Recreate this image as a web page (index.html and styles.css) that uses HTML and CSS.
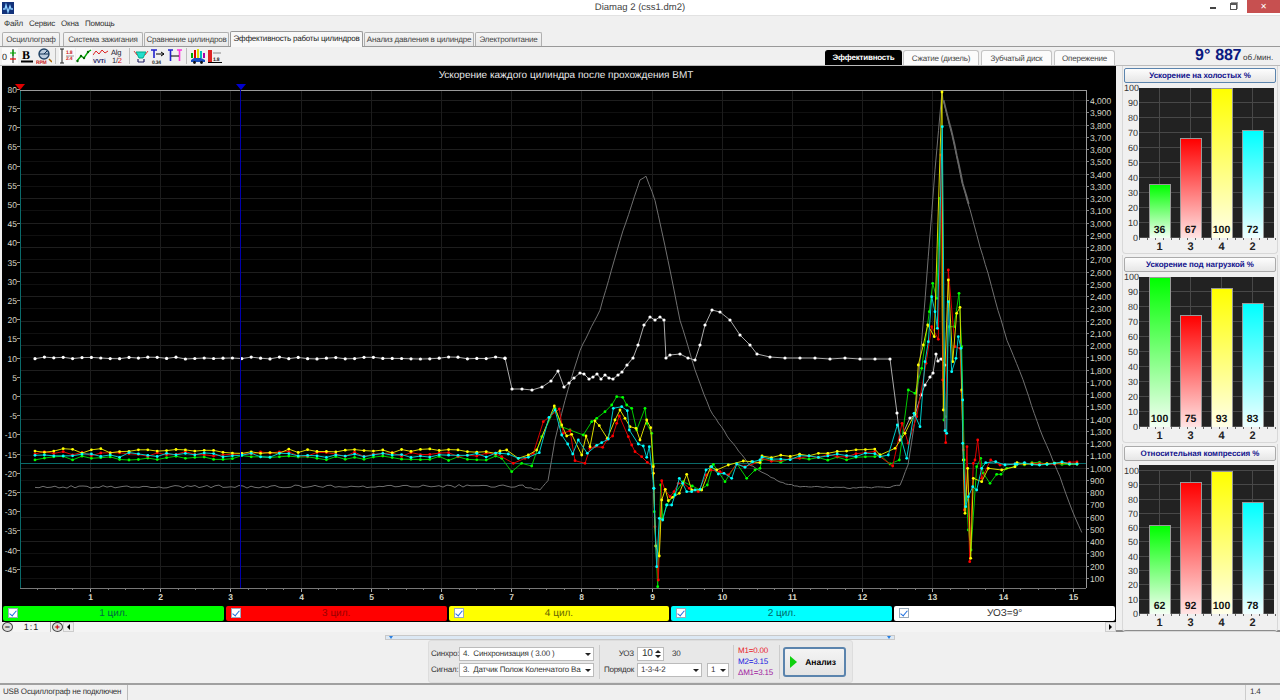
FILE: index.html
```html
<!DOCTYPE html>
<html lang="ru">
<head>
    <meta charset="UTF-8">
    <title>Diamag 2 (css1.dm2)</title>
    <link rel="stylesheet" href="styles.css">
</head>
<body>
<div class="app">
    <div class="titlebar">
        <svg class="app-icon" width="12" height="12" viewBox="0 0 12 12"><rect width="12" height="12" fill="#12327a"/><path d="M1 7h2l1-4 2 7 2-6 1 3h2" fill="none" stroke="#8fd0ff" stroke-width="1.3"/></svg>
        <div class="title-text">Diamag 2 (css1.dm2)</div>
        <div class="win-btns">
            <span class="win-min"></span>
            <span class="win-max"></span>
            <span class="win-close">✕</span>
        </div>
    </div>

    <div class="menubar">
        <span>Файл</span><span>Сервис</span><span>Окна</span><span>Помощь</span>
    </div>

    <div class="tabs">
        <div class="tab tab-a">Осциллограф</div>
        <div class="tab tab-b">Система зажигания</div>
        <div class="tab tab-c">Сравнение цилиндров</div>
        <div class="tab tab-d active">Эффективность работы цилиндров</div>
        <div class="tab tab-e">Анализ давления в цилиндре</div>
        <div class="tab tab-f">Электропитание</div>
    </div>

    <div class="toolbar">
        <div class="tools">
            <svg class="tool lit" viewBox="0 0 16 16"><text x="0" y="12" class="ic-t">0</text><path d="M11 1v14" stroke="#222"/><path d="M8 5h6M11 2v6" stroke="#0a0" stroke-width="1.2"/><path d="M8 11h6" stroke="#e00" stroke-width="1.2"/></svg>
            <svg class="tool" viewBox="0 0 16 16"><text x="3" y="11" class="ic-b">B</text><path d="M2 13.5h12" stroke="#000" stroke-width="2"/></svg>
            <svg class="tool" viewBox="0 0 16 16"><circle cx="8" cy="6" r="5" fill="#bcd" stroke="#246" stroke-width="1.4"/><path d="M8 6l3-3M3 6h10" stroke="#135"/><text x="0" y="15.5" class="ic-r">RPM</text><path d="M13 11l3 3" stroke="#a60" stroke-width="1.5"/></svg>
            <i class="tool-sep"></i>
            <svg class="tool lit" viewBox="0 0 16 16"><path d="M3 1v14M1 1h4M1 15h4" stroke="#222"/><text x="7" y="6" class="ic-r">1.8</text><text x="7" y="12" class="ic-r">2.4</text><path d="M7 8h8" stroke="#999"/></svg>
            <svg class="tool lit" viewBox="0 0 16 16"><path d="M1 13l4-5 3 2 4-6 3-2" fill="none" stroke="#0a0" stroke-width="1.4"/><circle cx="1.5" cy="13" r="1.2" fill="#060"/><circle cx="5" cy="8" r="1.2" fill="#060"/><circle cx="8" cy="10" r="1.2" fill="#060"/><circle cx="12" cy="4" r="1.2" fill="#060"/></svg>
            <svg class="tool" viewBox="0 0 16 16"><path d="M0 7l3-4 3 3 3-4 3 3 3-2" fill="none" stroke="#d22" stroke-width="1"/><text x="0" y="14.5" class="ic-v">VVTi</text></svg>
            <svg class="tool" viewBox="0 0 16 16"><text x="1" y="7" class="ic-a">Alg</text><text x="2" y="15" class="ic-a">1/<tspan fill="#d00">2</tspan></text></svg>
            <i class="tool-sep"></i>
            <svg class="tool" viewBox="0 0 16 16"><path d="M3 4h10l-3 6H6z" fill="#2dc" stroke="#0a8"/><path d="M1 3l3 4M15 3l-3 4" stroke="#d44"/><path d="M5 14h6M5 11v3M11 11v3" stroke="#226" stroke-width="1.2"/></svg>
            <svg class="tool" viewBox="0 0 16 16"><path d="M1 2h6M4 2v8" stroke="#22c" stroke-width="1.6"/><path d="M6 6h8M11 4l3 2-3 2" fill="none" stroke="#000"/><text x="2" y="15.5" class="ic-r ic-k">0.34</text></svg>
            <svg class="tool" viewBox="0 0 16 16"><path d="M1 2h5M3.5 2v11" stroke="#22c" stroke-width="1.6"/><path d="M10 2h5M12.500 2v11" stroke="#f3d" stroke-width="1.6"/><path d="M4 8h8" stroke="#000"/></svg>
            <i class="tool-sep"></i>
            <svg class="tool" viewBox="0 0 16 16"><path d="M2 10V5" stroke="#0a0" stroke-width="2"/><path d="M5 10V2" stroke="#d00" stroke-width="2"/><path d="M8 10V1" stroke="#dd0" stroke-width="2"/><path d="M11 10V3" stroke="#0bb" stroke-width="2"/><path d="M14 10V5" stroke="#a0a" stroke-width="2"/><path d="M1 14v-2l3-2h7l4 2v2z" fill="#1a4fc0"/><circle cx="4.500" cy="14.500" r="1.400" fill="#111"/><circle cx="11.500" cy="14.500" r="1.400" fill="#111"/></svg>
            <svg class="tool" viewBox="0 0 16 16"><rect x="1" y="2" width="4" height="12" fill="#d22"/><path d="M1 14.500h14" stroke="#000"/><text x="6" y="13" class="ic-r ic-k">1.8</text><path d="M6 5h8" stroke="#888"/></svg>
        </div>
        <div class="subtabs">
            <div class="subtab sub-a active">Эффективность</div>
            <div class="subtab sub-b">Сжатие (дизель)</div>
            <div class="subtab sub-c">Зубчатый диск</div>
            <div class="subtab sub-d">Опережение</div>
        </div>
        <div class="rpm"><b>9°</b><b class="rpm-val">887</b><span>об./мин.</span></div>
    </div>

    <div class="workspace">
        <div class="scope">
            <div class="chart" id="chartBox"></div>
            <div class="legend">
                <div class="leg leg-green"><i class="check"></i>1 цил.</div>
                <div class="leg leg-red"><i class="check"></i>3 цил.</div>
                <div class="leg leg-yellow"><i class="check"></i>4 цил.</div>
                <div class="leg leg-cyan"><i class="check"></i>2 цил.</div>
                <div class="leg leg-white"><i class="check"></i>УОЗ=9°</div>
            </div>
            <div class="scroller">
                <span class="zoom-btn">−</span>
                <span class="scale">1:1</span>
                <span class="zoom-btn zoom-plus">+</span>
                <span class="arrow arrow-left"></span>
                <span class="track"></span>
                <span class="arrow arrow-right"></span>
            </div>
        </div>
        <div class="side" id="sideBox"></div>
    </div>

    <div class="splitter-row"><div class="splitter"></div></div>

    <div class="controls">
        <div class="controls-box">
            <div class="group group-sync">
                <div class="row"><label>Синхро:</label><div class="select sel-wide">4.&nbsp; Синхронизация ( 3.00 )</div></div>
                <div class="row"><label>Сигнал:</label><div class="select sel-wide">3.&nbsp; Датчик Полож Коленчатого Вал</div></div>
            </div>
            <div class="group group-uoz">
                <div class="row"><label>УОЗ</label><div class="spin">10<span class="spin-arrows"></span></div><span class="spin-max">30</span></div>
                <div class="row"><label>Порядок</label><div class="select sel-order">1-3-4-2</div><div class="select sel-small">1</div></div>
            </div>
            <div class="group group-marks">
                <div class="m-red">M1=0.00</div>
                <div class="m-blue">M2=3.15</div>
                <div class="m-purple">ΔM1=3.15</div>
            </div>
            <div class="group group-run">
                <div class="run-btn"><i class="run-icon"></i>Анализ</div>
            </div>
        </div>
    </div>

    <div class="statusbar">
        <div class="status-main">USB Осциллограф не подключен</div>
        <div class="status-gap"></div>
        <div class="status-ver">1.4</div>
    </div>
</div>
<script src="chart.js"></script>
</body>
</html>
```

FILE: styles.css
```css
* {
    margin: 0;
    padding: 0;
    box-sizing: border-box;
}
html, body {
    height: 100%;
    overflow: hidden;
}
body {
    font-family: "Liberation Sans", Arial, sans-serif;
    font-size: 8px;
    letter-spacing: -0.2px;
    color: #222;
    background: #f0f0f0;
    white-space: nowrap;
    text-rendering: geometricPrecision;
}
.app {
    width: 1280px;
    height: 700px;
    display: flex;
    flex-direction: column;
}

/* title bar */
.titlebar {
    height: 16px;
    flex: none;
    position: relative;
    display: flex;
    align-items: center;
    background: #fff;
    border-bottom: 1px solid #e2e2e2;
    padding-left: 2px;
}
.app-icon {
    flex: none;
}
.title-text {
    position: absolute;
    left: 0;
    right: 0;
    top: 1px;
    text-align: center;
    font-size: 9.500px;
    letter-spacing: 0;
    line-height: 13px;
    color: #444;
}
.win-btns {
    margin-left: auto;
    height: 100%;
    display: flex;
    align-items: flex-start;
    position: relative;
}
.win-min {
    width: 6px;
    height: 2px;
    background: #444;
    margin: 7px 14px 0 0;
}
.win-max {
    width: 7px;
    height: 7px;
    border: 1px solid #555;
    border-top-width: 2px;
    box-shadow: 1px -1px 0 0 #999;
    margin: 3px 10px 0 0;
}
.win-close {
    width: 33px;
    height: 13px;
    background: #c75050;
    color: #fff;
    font-size: 8px;
    line-height: 13px;
    text-align: center;
}

/* menu */
.menubar {
    height: 15px;
    flex: none;
    display: flex;
    align-items: center;
    gap: 6px;
    padding-left: 4px;
    color: #333;
}

/* tabs */
.tabs {
    height: 16px;
    flex: none;
    display: flex;
    align-items: flex-end;
    padding-left: 2px;
    border-bottom: 1px solid #999;
    color: #444;
}
.tab {
    height: 14px;
    flex: none;
    text-align: center;
    line-height: 13px;
    background: linear-gradient(#f6f6f6, #e8e8e8);
    border: 1px solid #b0b0b0;
    border-bottom: none;
    border-radius: 2px 2px 0 0;
    margin-right: 1px;
}
.tab.active {
    height: 16px;
    background: #f8f8f8;
    color: #222;
    line-height: 14px;
    border-color: #999;
    margin-bottom: -1px;
}
.tab-a { width: 58px; }
.tab-b { width: 80px; margin-left: 2px; }
.tab-c { width: 85px; }
.tab-d { width: 133px; }
.tab-e { width: 110px; }
.tab-f { width: 67px; }

/* toolbar */
.toolbar {
    height: 19px;
    flex: none;
    display: flex;
    align-items: flex-end;
    border-bottom: 1px solid #bbb;
    position: relative;
}
.tools {
    display: flex;
    align-items: center;
    height: 18px;
    padding-left: 2px;
    gap: 1px;
}
.tool {
    width: 16px;
    height: 16px;
    flex: none;
}
.tool.lit {
    background: #fafafa;
}
.tool-sep {
    width: 1px;
    height: 16px;
    background: #bdbdbd;
    margin: 0 2px;
}
.ic-t { font: 9px "Liberation Sans", sans-serif; fill: #222; }
.ic-b { font: bold 12px "Liberation Serif", serif; fill: #000; }
.ic-r { font: bold 5px "Liberation Sans", sans-serif; fill: #c22; }
.ic-k { fill: #222; }
.ic-v { font: bold 6px "Liberation Sans", sans-serif; fill: #226; }
.ic-a { font: 7.5px "Liberation Sans", sans-serif; fill: #223; }

.subtabs {
    position: absolute;
    left: 825px;
    bottom: 0;
    display: flex;
    gap: 2px;
}
.subtab {
    height: 15px;
    line-height: 15px;
    text-align: center;
    background: #fbfbfb;
    border: 1px solid #c4c4c4;
    border-bottom: none;
    border-radius: 3px 3px 0 0;
    color: #444;
}
.subtab.active {
    background: #000;
    border-color: #000;
    color: #fff;
    font-weight: bold;
    line-height: 13px;
}
.sub-a { width: 77px; margin-right: -1px; }
.sub-b { width: 76px; }
.sub-c { width: 71px; }
.sub-d { width: 61px; }
.rpm {
    position: absolute;
    left: 1195px;
    top: 1px;
    display: flex;
    align-items: baseline;
    color: #0a1a80;
    font-size: 16px;
    line-height: 16px;
    letter-spacing: 0;
}
.rpm-val {
    margin-left: 5px;
    letter-spacing: -0.3px;
}
.rpm span {
    font-size: 8px;
    margin-left: 2px;
    color: #333;
}

/* main part */
.workspace {
    height: 566px;
    flex: none;
    display: flex;
    border-bottom: 2px solid #8c8c8c;
}
.scope {
    width: 1114px;
    margin-left: 2px;
    flex: none;
    display: flex;
    flex-direction: column;
    background: #000;
}
.chart {
    height: 540px;
    flex: none;
}
.chart svg {
    display: block;
}
.ax-text {
    font: 8.500px "Liberation Sans", sans-serif;
    letter-spacing: 0;
    fill: #d8d8c8;
}
.ax-end {
    text-anchor: end;
}
.ax-mid {
    text-anchor: middle;
    font-weight: bold;
}
.ch-title {
    font: 10px "Liberation Sans", sans-serif;
    letter-spacing: 0;
    fill: #e8e8e8;
    text-anchor: middle;
}

.legend {
    height: 16px;
    flex: none;
    display: flex;
    gap: 2px;
    padding: 0 1px 1px;
}
.leg {
    flex: 1;
    position: relative;
    border-radius: 2px;
    text-align: center;
    font-size: 10px;
    letter-spacing: 0;
    line-height: 15px;
}
.check {
    position: absolute;
    left: 5px;
    top: 2px;
    width: 10px;
    height: 10px;
    background: #fff;
    border: 1px solid #9ab;
}
.check::after {
    content: "";
    position: absolute;
    left: 2px;
    top: 0;
    width: 3px;
    height: 6px;
    border: solid #1e6fe0;
    border-width: 0 1.500px 1.500px 0;
    transform: rotate(40deg);
}
.leg-green { background: #00ff00; color: #064; }
.leg-red { background: #ff0000; color: #900; }
.leg-yellow { background: #ffff00; color: #660; }
.leg-cyan { background: #00ffff; color: #066; }
.leg-white { background: #fff; color: #333; }

.scroller {
    height: 10px;
    flex: 1;
    display: flex;
    align-items: stretch;
    background: #f0f0f0;
    margin-left: -2px;
    padding-left: 2px;
    font-size: 9px;
    letter-spacing: 0;
    line-height: 11px;
}
.zoom-btn {
    width: 11px;
    flex: none;
    border: 1px solid #444;
    border-radius: 50%;
    text-align: center;
    line-height: 8px;
    font-weight: bold;
    background: #ddd;
}
.zoom-plus {
    color: #c00;
    margin-left: 1px;
}
.scale {
    width: 38px;
    flex: none;
    text-align: center;
    letter-spacing: 1px;
    background: #f4f4f4;
    border-right: 1px solid #aaa;
}
.arrow {
    width: 11px;
    flex: none;
    position: relative;
    background: #eee;
    border: 1px solid #ccc;
}
.arrow::after {
    content: "";
    position: absolute;
    top: 1px;
    left: 3px;
    border: 3px solid transparent;
}
.arrow-left::after {
    border-right-color: #000;
    border-left-width: 0;
}
.arrow-right::after {
    border-left-color: #000;
    border-right-width: 0;
}
.track {
    flex: 1;
    background: #f4f4f4;
}

/* bars on the right */
.side {
    flex: 1;
    display: flex;
    flex-direction: column;
    gap: 1px;
    padding: 0 2px 0 6px;
}
.panel {
    --scale: 150px;
    height: 188px;
    flex: none;
    padding: 2px 1px 0 1px;
    border: 1px solid #d8d8d8;
    border-top: none;
    border-radius: 0 0 4px 4px;
}
.panel-short {
    --scale: 143px;
}
.panel-title {
    height: 15px;
    text-align: center;
    font-weight: bold;
    font-size: 8px;
    letter-spacing: -0.05px;
    line-height: 14px;
    color: #10108c;
    background: linear-gradient(#fdfdfd, #e6e6e6);
    border: 1px solid #aaa;
    border-radius: 2px;
}
.panel.first .panel-title {
    border-color: #5b84ad;
}
.plot-row {
    display: flex;
    margin-top: 5px;
}
.panel-short .plot-row {
    margin-top: 4px;
}
.y-labels {
    width: 15px;
    height: var(--scale);
    flex: none;
    display: flex;
    flex-direction: column;
    justify-content: space-between;
    text-align: right;
    padding-right: 1px;
    font-size: 9px;
    letter-spacing: 0;
    color: #333;
}
.panel-short .y-labels {
    margin-top: 6px;
}
.y-labels span {
    height: 0;
    line-height: 0;
}
.plot {
    width: 135px;
    margin-left: 0;
    padding: 0 5px;
    display: grid;
    grid-template-columns: repeat(4, 31px);
    align-items: end;
    background-color: #222;
    background-image: repeating-linear-gradient(to top, #484848 0, #484848 1px, transparent 1px, transparent 15px);
}
.panel-short .plot {
    padding-top: 6px;
    background-image: repeating-linear-gradient(to top, #484848 0, #484848 1px, transparent 1px, transparent 14.300px);
}
.bar-col {
    height: var(--scale);
    position: relative;
    display: flex;
    justify-content: center;
    align-items: flex-end;
}
.bar-col::before {
    content: "";
    position: absolute;
    left: 15px;
    top: 0;
    bottom: 0;
    width: 1px;
    background: #484848;
}
.bar {
    width: 22px;
    position: relative;
    border: 1px solid #999;
    border-bottom: none;
    text-align: center;
    font-weight: bold;
    font-size: 10.500px;
    letter-spacing: 0;
    color: #111;
}
.bar b {
    position: absolute;
    left: 0;
    right: 0;
    bottom: 2px;
    line-height: 12px;
}
.bar-green { background: linear-gradient(#00ff00, #f4fff4); }
.bar-red { background: linear-gradient(#ff0000, #ffe4e4); }
.bar-yellow { background: linear-gradient(#ffff00, #ffffe8); }
.bar-cyan { background: linear-gradient(#00ffff, #f0ffff); }
.x-labels {
    margin-left: 15px;
    padding: 0 5px;
    display: grid;
    grid-template-columns: repeat(4, 31px);
    text-align: center;
    font-weight: bold;
    font-size: 11px;
    line-height: 13px;
    background: repeating-linear-gradient(to right, #666 0, #666 1px, transparent 1px, transparent 8px) 0 0 / 100% 2px no-repeat;
    padding-top: 3px;
}

/* bottom controls */
.splitter-row {
    height: 8px;
    flex: none;
    display: flex;
    justify-content: center;
    align-items: flex-end;
}
.splitter {
    width: 510px;
    height: 5px;
    border: 1px solid #c8c8c8;
    background: #dce8f4;
    position: relative;
}
.splitter::before,
.splitter::after {
    content: "";
    position: absolute;
    top: 0;
    border: 2px solid transparent;
    border-top: 3px solid #2a7fe0;
    border-bottom-width: 0;
}
.splitter::before { left: 3px; }
.splitter::after { right: 3px; }
.controls {
    height: 45px;
    flex: none;
    padding-left: 428px;
    border-bottom: 2px solid #a0a0a0;
}
.controls-box {
    width: 425px;
    height: 43px;
    margin-top: 0;
    display: flex;
    align-items: center;
    background: #e8e8e8;
    border: 1px solid #ddd;
    border-radius: 3px;
    color: #333;
}
.group {
    display: flex;
    flex-direction: column;
    justify-content: center;
    height: 34px;
    gap: 2px;
    padding: 0 4px 0 2px;
    border-right: 1px solid #ccc;
}
.row {
    display: flex;
    align-items: center;
    gap: 2px;
    height: 14px;
}
.group-sync { width: 171px; }
.group-sync label { width: 26px; }
.group-uoz { width: 134px; }
.group-uoz label { width: 31px; text-align: right; margin-right: 1px; }
.group-uoz { padding-left: 3px; }
.group-marks {
    width: 46px;
    gap: 0;
    line-height: 11px;
    padding-left: 4px;
}
.group-run {
    border-right: none;
    padding-left: 3px;
    height: 100%;
    justify-content: flex-start;
    padding-top: 6px;
}
.select {
    height: 14px;
    position: relative;
    background: #fff;
    border: 1px solid #bbb;
    line-height: 12px;
    padding-left: 3px;
    overflow: hidden;
}
.select::after {
    content: "";
    position: absolute;
    top: 0;
    bottom: 0;
    right: 0;
    width: 12px;
    background: #fff;
}
.select::before {
    content: "";
    position: absolute;
    z-index: 1;
    right: 2px;
    top: 5px;
    border: 3px solid transparent;
    border-top-color: #222;
    border-bottom-width: 0;
}
.sel-wide { width: 135px; }
.sel-order { width: 65px; }
.sel-small { width: 22px; margin-left: 3px; }
.spin {
    width: 27px;
    height: 14px;
    margin-left: 0;
    background: #fff;
    border: 1px solid #bbb;
    position: relative;
    padding-left: 4px;
    line-height: 12px;
    font-size: 10px;
}
.spin-arrows {
    position: absolute;
    right: 2px;
    top: 2px;
    border: 3px solid transparent;
    border-bottom-color: #222;
    border-top-width: 0;
}
.spin-arrows::after {
    content: "";
    position: absolute;
    left: -3px;
    top: 5px;
    border: 3px solid transparent;
    border-top-color: #222;
    border-bottom-width: 0;
}
.spin-max {
    margin-left: 6px;
}
.m-red { color: #e8202a; }
.m-blue { color: #2020e0; }
.m-purple { color: #a020a0; }
.run-btn {
    width: 63px;
    height: 30px;
    position: relative;
    border: 2px solid #5b84ad;
    border-radius: 3px;
    background: linear-gradient(#f4f4f4, #e4e4e4);
    font-weight: bold;
    font-size: 8.500px;
    letter-spacing: 0;
    line-height: 26px;
    text-align: right;
    padding-right: 8px;
    color: #000;
}
.run-icon {
    position: absolute;
    left: 5px;
    top: 7px;
    border-style: solid;
    border-width: 6.500px 0 6.500px 7px;
    border-color: transparent transparent transparent #10d010;
}

/* status */
.statusbar {
    flex: 1;
    display: flex;
    color: #333;
    line-height: 13px;
}
.status-main {
    width: 128px;
    padding-left: 3px;
    border-right: 1px solid #bbb;
}
.status-gap {
    flex: 1;
}
.status-ver {
    width: 35px;
    padding-left: 4px;
    border-left: 1px solid #ccc;
}
```

FILE: chart.js
```js
// точки сняты с картинки, x/y в координатах окна
function rnd(seed) {
    var s = seed;
    return function () {
        s = (s * 16807) % 2147483647;
        return (s % 1000) / 1000 - 0.5;
    };
}
// куски кривых записаны в увеличении 3x от точки (ox,oy)
function zoomed(ox, oy, list) {
    var out = [];
    for (var i = 0; i < list.length; i += 2) {
        out.push([ox + list[i] / 3, oy + list[i + 1] / 3]);
    }
    return out;
}
function flat(x0, x1, step, y0, y1, amp, r) {
    var out = [];
    for (var x = x0; x < x1; x += step) {
        var k = (x - x0) / (x1 - x0);
        out.push([x, y0 + (y1 - y0) * k + r() * amp]);
    }
    return out;
}
// дробим кривую и добавляем дрожание
function shaky(pts, step, amp, r) {
    var out = [];
    for (var i = 0; i < pts.length - 1; i++) {
        var a = pts[i], b = pts[i + 1];
        var n = Math.max(1, Math.round((b[0] - a[0]) / step));
        for (var k = 0; k < n; k++) {
            out.push([a[0] + (b[0] - a[0]) * k / n, a[1] + (b[1] - a[1]) * k / n + r() * amp]);
        }
    }
    return out;
}

var cylinders = [
    {
        color: '#00ff00', line: '#00c800', seed: 11, base: 458, mid: 461,
        a: [5,355,35,395,65,370,95,378,125,290,165,205,185,260,210,270,250,285,275,245,290,235,315,215,335,195,350,170,368,172,380,195,395,205,410,270,435,205,440,250,455,280],
        b: [100,75,103,215,113,440,122,135,128,235,140,195,165,160,190,125,217,138,240,150,262,135,280,73,315,125,350,70,380,115,405,90,420,85],
        c: [0,525,30,552,58,540,85,330,105,340,125,265,148,95,158,10,170,55,180,-245,192,420,197,410,205,140,222,140,237,40,245,200],
        d: [118,60,130,270,138,330,155,80,167,55,175,100,195,130,215,103,228,103,245,85,270,80]
    },
    {
        color: '#ff0000', line: '#d80000', seed: 23, base: 454, mid: 460,
        a: [5,350,40,370,75,355,100,340,130,245,178,207,190,280,210,272,225,362,255,370,270,325,285,320,308,322,320,300,338,288,350,250,358,228,385,290,395,315,405,335,425,350,442,367,460,380],
        b: [100,100,105,260,115,420,125,122,135,150,150,170,162,155,175,130,190,130,208,145,235,155,258,105,272,90,300,95,325,105,350,72,375,80,420,65],
        c: [0,530,38,558,66,430,85,490,110,410,138,250,155,140,175,178,183,-375,188,300,197,488,205,-30,225,200,240,205,245,335],
        d: [115,30,118,210,126,20,134,365,145,70,150,60,158,0,170,115,197,60,225,75,270,72]
    },
    {
        color: '#ffff00', line: '#d8d800', seed: 37, base: 451, mid: 457,
        a: [0,333,20,330,55,355,85,345,110,330,163,198,185,255,200,288,215,283,245,345,258,288,270,320,285,243,298,257,322,295,345,240,360,210,375,235,390,260,408,265,420,300,440,240,452,263,460,380],
        b: [100,100,107,318,118,348,125,180,136,148,145,182,158,172,178,160,200,103,215,150,245,150,272,80,290,90,325,75,370,63,395,65,420,68],
        c: [0,525,45,505,75,460,105,400,115,255,130,195,143,135,163,170,186,-564,190,390,205,0,218,245,230,100,240,82,245,330],
        d: [115,60,120,220,128,85,137,355,145,115,170,125,190,85,230,90,270,80]
    },
    {
        color: '#00ffff', line: '#00c8c8', seed: 51, base: 455, mid: 459,
        a: [0,340,25,342,55,355,85,352,118,338,147,232,165,210,185,285,203,312,218,342,235,300,262,340,290,316,305,308,325,297,340,205,365,200,382,212,388,270,415,312,430,318,440,352,448,320,462,445],
        b: [101,145,110,380,118,235,128,240,140,195,155,195,165,165,178,115,188,130,200,155,215,155,225,150,240,148,258,90,275,80,295,102,312,100,335,115,350,72,375,82,398,65,420,60],
        c: [0,530,25,525,52,435,80,535,102,400,120,440,135,245,145,185,155,50,165,95,172,145,187,-460,195,452,200,460,205,65,215,275,228,235,235,170,243,205,248,360],
        d: [113,10,122,200,130,170,143,140,155,150,170,85,182,68,212,65,240,75,270,72]
    }
];

var whitePts = [[505,358],[512,389],[522,389],[532,390],[542,387],[551,381],[558,371],[564,387],[569,383],[574,378],[580,373],[584,374],[589,379],[593,377],[597,374],[601,379],[605,375],[609,378],[613,379],[618,375],[622,372],[627,365],[633,358],[638,345],[644,325],[650,317],[655,320],[660,317],[664,320],[666,358],[670,355],[680,354],[688,358],[695,360],[700,345],[705,325],[712,310],[720,312],[730,320],[740,335],[750,345],[757,354],[770,357],[785,358],[800,358],[815,358],[830,359],[845,358],[860,359],[875,359],[890,359],[897,413],[900,440],[910,418],[915,415],[921,395],[925,385],[930,377],[933,373],[936,354],[938,361],[941,359],[945,365]];

var greyPts = [[525,487],[540,490],[548,480],[555,440],[565,400],[580,350],[600,310],[620,240],[640,180],[646,176],[655,200],[668,260],[680,320],[695,370],[710,410],[730,440],[750,465],[780,482],[800,487],[820,487],[850,488],[890,487],[900,485],[908,465],[915,420],[925,300],[935,170],[942,92],[943,100],[952,135],[962,183],[970,210],[980,247],[988,273],[995,300],[1007,340],[1023,380],[1040,430],[1050,453],[1060,477],[1072,510],[1085,540]];

var barPanels = [
    { title: 'Ускорение на холостых %', values: [36, 67, 100, 72], cls: 'first' },
    { title: 'Ускорение под нагрузкой %', values: [100, 75, 93, 83], cls: '' },
    { title: 'Относительная компрессия %', values: [62, 92, 100, 78], cls: 'panel-short' }
];
var barNames = ['1', '3', '4', '2'];
var barColors = ['green', 'red', 'yellow', 'cyan'];

var objChart = {
    X0: 19.8, XK: 70.2,
    L: 20, R: 1086, T: 90, B: 588,

    init: function (el) {
        var s = '<svg width="1114" height="540" viewBox="2 66 1114 540">';
        s += this.grid();
        s += this.curves();
        s += this.cursors();
        s += '</svg>';
        document.getElementById(el).innerHTML = s;
    },
    line: function (x1, y1, x2, y2, col) {
        return '<line x1="' + x1 + '" y1="' + y1 + '" x2="' + x2 + '" y2="' + y2 + '" stroke="' + col + '"/>';
    },
    text: function (x, y, str, cls) {
        return '<text x="' + x + '" y="' + y + '" class="ax-text ' + cls + '">' + str + '</text>';
    },
    grid: function () {
        var s = '';
        var i, y, x;
        // обороты: шкала справа
        for (i = 100; i <= 4000; i += 100) {
            y = Math.round(467.6 - (i - 1000) * 0.1225) + 0.5;
            s += this.line(this.L, y, this.R, y, i % 200 ? '#101010' : '#1e1e1e');
            s += this.line(this.R, y, this.R + 3, y, '#888');
            var lab = i >= 1000 ? Math.floor(i / 1000) + ',' + String(i % 1000 + 1000).slice(1) : i;
            s += this.text(this.R + 4, y + 3, lab, '');
        }
        // левая шкала
        for (i = 80; i >= -45; i -= 5) {
            y = Math.round(396 - i * 3.84) + 0.5;
            s += this.line(this.L - 3, y, this.L, y, '#999');
            s += this.text(this.L - 3, y + 3, i, 'ax-end');
        }
        // ось x
        for (i = 1; i <= 15; i++) {
            x = Math.round(this.X0 + this.XK * i) + 0.5;
            s += this.line(x, this.T, x, this.B, '#1c1c1c');
            s += this.line(x, this.B, x, this.B + 4, '#aaa');
            s += this.text(x, 600, i, 'ax-mid');
        }
        for (i = 1; i < 61; i++) {
            if (i % 4) {
                x = Math.round(this.X0 + this.XK * i / 4) + 0.5;
                s += this.line(x, this.B, x, this.B + 2, '#777');
            }
        }
        s += this.line(this.L + 0.5, this.T, this.L + 0.5, this.B, '#0a6a6a');
        s += this.line(this.L, 90.5, this.R, 90.5, '#999');
        s += this.line(this.L, 588.5, this.R, 588.5, '#777');
        s += this.line(this.R + 0.5, this.T, this.R + 0.5, this.B, '#999');
        s += this.line(this.L, 463.5, this.R, 463.5, '#0a6a6a');
        s += '<text x="566" y="78" class="ch-title">Ускорение каждого цилиндра после прохождения ВМТ</text>';
        return s;
    },
    polyline: function (pts, col, w) {
        var d = '';
        for (var i = 0; i < pts.length; i++) {
            d += pts[i][0].toFixed(1) + ',' + pts[i][1].toFixed(1) + ' ';
        }
        return '<polyline points="' + d + '" fill="none" stroke="' + col + '" stroke-width="' + w + '"/>';
    },
    dots: function (pts, col, r) {
        var s = '';
        for (var i = 0; i < pts.length; i++) {
            s += '<circle cx="' + pts[i][0].toFixed(1) + '" cy="' + pts[i][1].toFixed(1) + '" r="' + r + '" fill="' + col + '"/>';
        }
        return s;
    },
    curves: function () {
        var s = '';
        var r = rnd(7);

        // серая кривая оборотов
        var grey = flat(35, 525, 4, 487, 486, 3, r).concat(shaky(greyPts, 3, 1.2, r));
        s += this.polyline(grey, '#707070', 1);
        var grey2 = [];
        for (var g = 0; g < greyPts.length; g++) {
            if (greyPts[g][0] > 942 && greyPts[g][0] < 972) {
                grey2.push([greyPts[g][0] + 0.8, greyPts[g][1] + 0.5]);
            }
        }
        s += this.polyline(shaky(grey2, 2, 1.5, r), '#666', 1.5);

        // белая кривая УОЗ
        var white = flat(35, 505, 9.4, 358, 358, 2, r).concat(whitePts);
        s += this.polyline(white, '#aaa', 1);
        s += this.dots(white, '#fff', 1.6);

        for (var i = 0; i < cylinders.length; i++) {
            var c = cylinders[i];
            var rr = rnd(c.seed * 131);
            var pts = flat(35, 500, 9.4, c.base, c.base, 5, rr);
            pts = pts.concat(zoomed(500, 340, c.a));
            pts = pts.concat(zoomed(620, 440, c.b));
            pts = pts.concat(flat(762, 880, 9.4, c.mid, c.base - 1, 4, rr));
            pts = pts.concat(zoomed(880, 280, c.c));
            pts = pts.concat(zoomed(925, 440, c.d));
            pts = pts.concat(flat(1017, 1078, 7.5, 464, 463, 3, rr));
            s += this.polyline(pts, c.line, 1);
            s += this.dots(pts, c.color, 1.4);
        }
        return s;
    },
    cursors: function () {
        var s = this.line(240.5, this.T, 240.5, this.B, '#0000b0');
        s += '<polygon points="15,84 25,84 20,90" fill="#e00000"/>';
        s += '<polygon points="236,84 246,84 241,90" fill="#0000d0"/>';
        return s;
    }
};

var objSide = {
    init: function (el) {
        var s = '';
        for (var i = 0; i < barPanels.length; i++) {
            s += this.panel(barPanels[i]);
        }
        document.getElementById(el).innerHTML = s;
    },
    panel: function (p) {
        var s = '<div class="panel ' + p.cls + '">';
        s += '<div class="panel-title">' + p.title + '</div>';
        s += '<div class="plot-row"><div class="y-labels">';
        for (var v = 100; v >= 0; v -= 10) {
            s += '<span>' + v + '</span>';
        }
        s += '</div><div class="plot">';
        for (var i = 0; i < 4; i++) {
            s += '<div class="bar-col"><div class="bar bar-' + barColors[i] + '" style="height:' + p.values[i] + '%"><b>' + p.values[i] + '</b></div></div>';
        }
        s += '</div></div><div class="x-labels">';
        for (var k = 0; k < 4; k++) {
            s += '<span>' + barNames[k] + '</span>';
        }
        s += '</div></div>';
        return s;
    }
};

objChart.init('chartBox');
objSide.init('sideBox');
```
